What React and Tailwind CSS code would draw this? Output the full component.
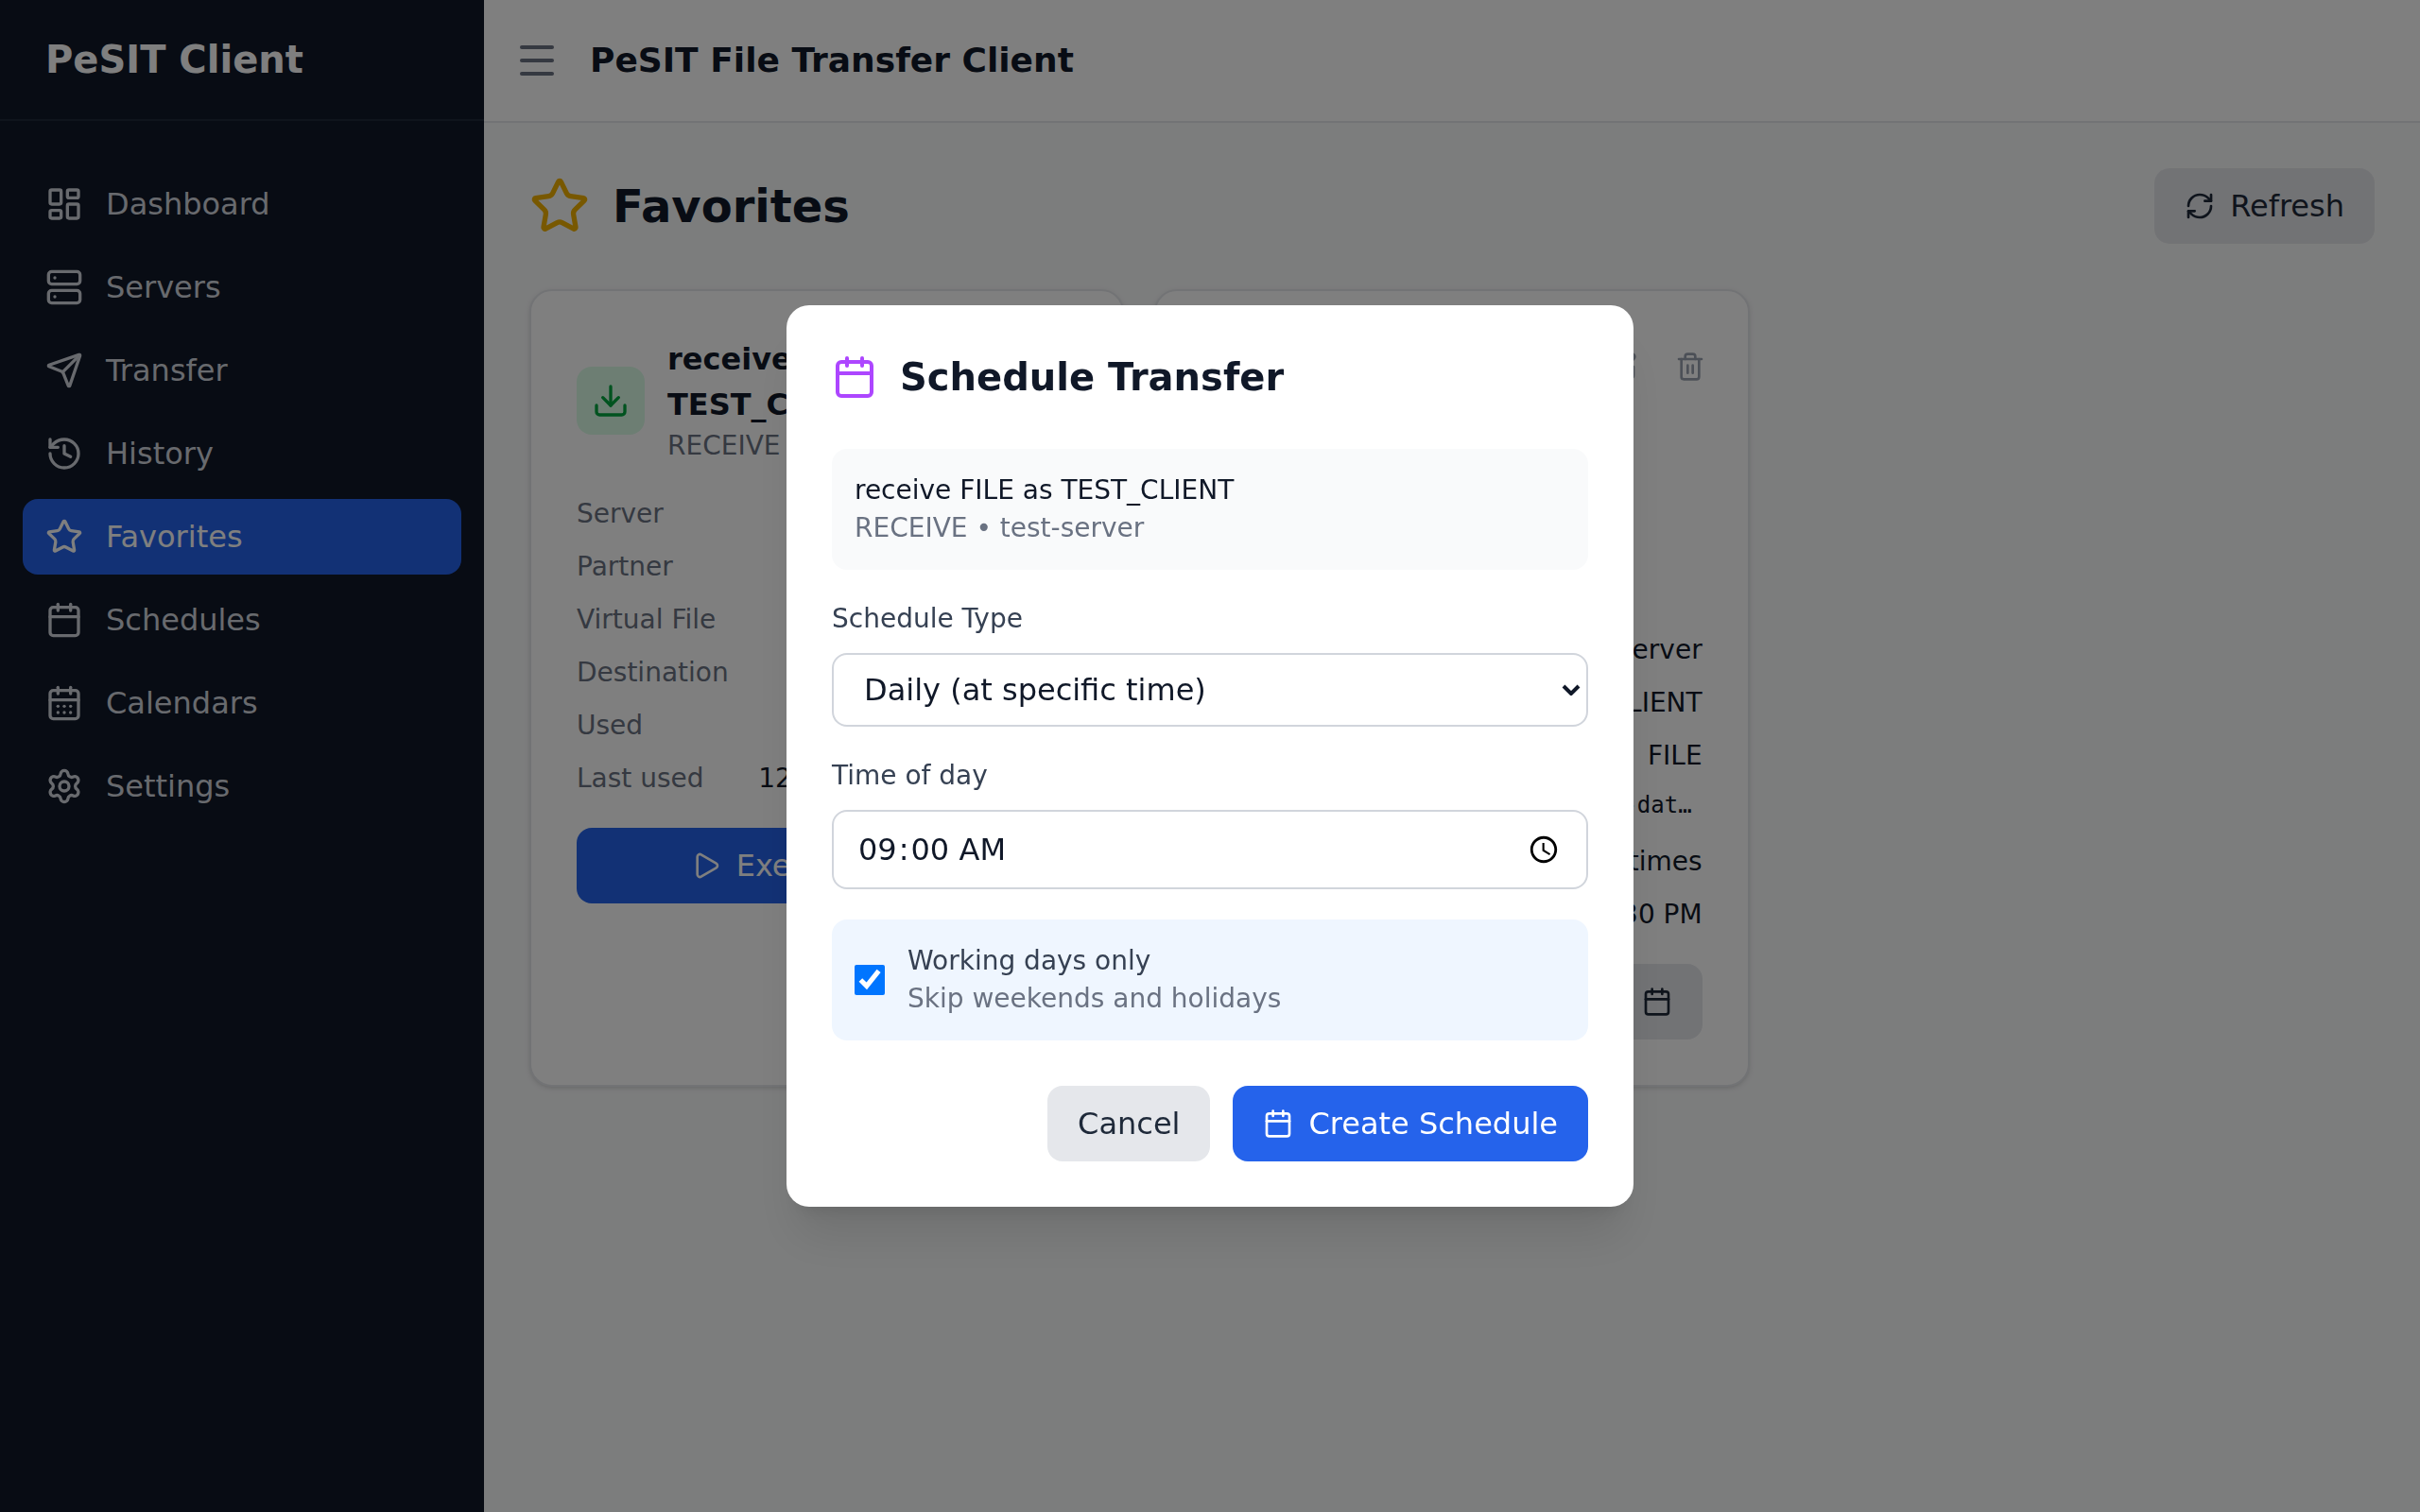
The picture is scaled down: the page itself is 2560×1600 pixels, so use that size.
import React, { useState } from 'react'
import {
  Calendar,
  CalendarDays,
  Download,
  History,
  LayoutDashboard,
  Menu,
  Play,
  RefreshCw,
  Send,
  Server,
  Settings,
  SquarePen,
  Star,
  Trash2,
} from 'lucide-react'
import clsx from 'clsx'

const navigation = [
  { name: 'Dashboard', href: '#dashboard', icon: LayoutDashboard },
  { name: 'Servers', href: '#servers', icon: Server },
  { name: 'Transfer', href: '#transfer', icon: Send },
  { name: 'History', href: '#history', icon: History },
  { name: 'Favorites', href: '#favorites', icon: Star },
  { name: 'Schedules', href: '#schedules', icon: Calendar },
  { name: 'Calendars', href: '#calendars', icon: CalendarDays },
  { name: 'Settings', href: '#settings', icon: Settings },
]

const favorites = [
  {
    id: 1,
    name: 'receive FILE as TEST_CLIENT',
    direction: 'RECEIVE',
    server: 'test-server',
    partner: 'TEST_CLIENT',
    virtualFile: 'FILE',
    destination: '/data/in/client-data.txt',
    used: '2 times',
    lastUsed: '12/16/2025, 9:44:30 PM',
  },
  {
    id: 2,
    name: 'receive FILE as TEST_CLIENT_CPY from test-server with daily archive',
    direction: 'RECEIVE',
    server: 'test-server',
    partner: 'TEST_CLIENT',
    virtualFile: 'FILE',
    destination: '/data/in/client-data.txt',
    used: '3 times',
    lastUsed: '12/16/2025, 9:40:30 PM',
  },
]

function Button({ variant = 'primary', className, children, ...props }) {
  return (
    <button
      type="button"
      className={clsx(
        'flex items-center justify-center gap-4 rounded-2xl px-8 py-4',
        variant === 'primary' ? 'bg-[#2563eb] text-white' : 'bg-gray-200 text-gray-800',
        className
      )}
      {...props}
    >
      {children}
    </button>
  )
}

function Sidebar({ current }) {
  return (
    <aside className="w-128 shrink-0 bg-gray-900 text-white">
      <div className="flex h-32 items-center border-b-2 border-gray-800 px-12">
        <span className="text-[40px] leading-14 font-bold">PeSIT Client</span>
      </div>
      <nav className="flex flex-col gap-2 px-6 py-12">
        {navigation.map((item) => (
          <a
            key={item.name}
            href={item.href}
            className={clsx(
              'flex items-center gap-6 rounded-2xl px-6 py-4',
              item.name === current ? 'bg-[#2563eb] text-white' : 'text-gray-300'
            )}
          >
            <item.icon className="size-10" />
            {item.name}
          </a>
        ))}
      </nav>
    </aside>
  )
}

function DetailRow({ label, children }) {
  return (
    <div className="flex justify-between">
      <dt className="text-gray-500">{label}</dt>
      {children}
    </div>
  )
}

function FavoriteCard({ favorite }) {
  return (
    <article className="rounded-3xl border-2 border-gray-200 bg-white p-12 shadow-[0_2px_6px_rgba(0,0,0,0.1),0_2px_4px_-2px_rgba(0,0,0,0.1)]">
      <div className="mb-8 flex items-start justify-between">
        <div className="flex items-center gap-6">
          <div className="rounded-2xl bg-green-100 p-4 text-green-600">
            <Download className="size-10" />
          </div>
          <div>
            <h3 className="font-semibold text-gray-900">{favorite.name}</h3>
            <p className="text-[28px] leading-10 text-gray-500">{favorite.direction}</p>
          </div>
        </div>
        <div className="flex gap-2 text-gray-400">
          <button type="button" aria-label="Edit" className="p-4">
            <SquarePen className="size-8" />
          </button>
          <button type="button" aria-label="Delete" className="p-4">
            <Trash2 className="size-8" />
          </button>
        </div>
      </div>

      <dl className="mb-8 flex flex-col gap-4 text-[28px] leading-10 text-gray-900">
        <DetailRow label="Server">
          <dd>{favorite.server}</dd>
        </DetailRow>
        <DetailRow label="Partner">
          <dd>{favorite.partner}</dd>
        </DetailRow>
        <DetailRow label="Virtual File">
          <dd>{favorite.virtualFile}</dd>
        </DetailRow>
        <DetailRow label="Destination">
          <dd className="max-w-[300px] truncate font-['DejaVu_Sans_Mono',monospace] text-2xl">
            {favorite.destination}
          </dd>
        </DetailRow>
        <DetailRow label="Used">
          <dd>{favorite.used}</dd>
        </DetailRow>
        <DetailRow label="Last used">
          <dd>{favorite.lastUsed}</dd>
        </DetailRow>
      </dl>

      <div className="flex gap-4">
        <Button className="flex-1">
          <Play className="size-8" />
          Execute
        </Button>
        <Button variant="secondary" aria-label="Schedule">
          <Calendar className="size-8" />
        </Button>
      </div>
    </article>
  )
}

function ScheduleModal({ favorite }) {
  const [type, setType] = useState('daily')
  const [time, setTime] = useState('09:00')
  const [workingDays, setWorkingDays] = useState(true)

  return (
    <div className="fixed inset-0 flex items-center justify-center bg-black/50">
      <div
        role="dialog"
        aria-labelledby="schedule-title"
        className="w-full max-w-4xl rounded-3xl bg-white p-12 shadow-[0_40px_50px_-10px_rgba(0,0,0,0.1),0_16px_20px_-12px_rgba(0,0,0,0.1)]"
      >
        <h2
          id="schedule-title"
          className="mb-12 flex items-center gap-6 text-[40px] leading-14 font-bold text-gray-900"
        >
          <Calendar className="size-12 text-purple-500" />
          Schedule Transfer
        </h2>

        <div className="flex flex-col gap-8">
          <div className="rounded-2xl bg-gray-50 p-6 text-[28px] leading-10">
            <p className="text-gray-900">{favorite.name}</p>
            <p className="text-gray-500">
              {favorite.direction} • {favorite.server}
            </p>
          </div>

          <div>
            <label htmlFor="schedule-type" className="mb-4 block text-[28px] leading-10 text-gray-700">
              Schedule Type
            </label>
            <div className="relative">
              <select
                id="schedule-type"
                value={type}
                onChange={(e) => setType(e.target.value)}
                className="block h-[78px] w-full appearance-none rounded-2xl border-2 border-gray-300 bg-white px-8 text-gray-900"
              >
                <option value="once">One time</option>
                <option value="hourly">Hourly</option>
                <option value="daily">Daily (at specific time)</option>
                <option value="weekly">Weekly</option>
              </select>
              <svg
                className="pointer-events-none absolute inset-y-0 right-2 my-auto h-3 w-5 text-gray-900"
                viewBox="0 0 20 12"
                fill="none"
                stroke="currentColor"
                strokeWidth="4"
              >
                <path d="M2 2l8 8 8-8" />
              </svg>
            </div>
          </div>

          <div>
            <label htmlFor="schedule-time" className="mb-4 block text-[28px] leading-10 text-gray-700">
              Time of day
            </label>
            <input
              id="schedule-time"
              type="time"
              value={time}
              onChange={(e) => setTime(e.target.value)}
              className="block w-full rounded-2xl border-2 border-gray-300 bg-white px-6 py-4 text-gray-900 [&::-webkit-calendar-picker-indicator]:p-1 [&::-webkit-datetime-edit-ampm-field]:px-0.5 [&::-webkit-datetime-edit-hour-field]:px-0.5 [&::-webkit-datetime-edit-minute-field]:px-0.5"
            />
          </div>

          <div className="flex items-center gap-6 rounded-2xl bg-blue-50 p-6">
            <input
              id="working-days"
              type="checkbox"
              checked={workingDays}
              onChange={(e) => setWorkingDays(e.target.checked)}
              className="size-8"
            />
            <label htmlFor="working-days" className="text-[28px] leading-10 text-gray-700">
              Working days only
              <span className="block text-gray-500">Skip weekends and holidays</span>
            </label>
          </div>
        </div>

        <div className="mt-12 flex justify-end gap-6">
          <Button variant="secondary">Cancel</Button>
          <Button>
            <Calendar className="size-8" />
            Create Schedule
          </Button>
        </div>
      </div>
    </div>
  )
}

function App() {
  return (
    <div className="flex min-h-screen bg-gray-50 font-['DejaVu_Sans',sans-serif] text-[32px] leading-12">
      <Sidebar current="Favorites" />

      <div className="min-w-0 flex-1">
        <header className="flex items-center gap-8 border-b-2 border-gray-200 bg-white p-8">
          <button type="button" aria-label="Toggle sidebar" className="py-2 text-gray-500">
            <Menu className="size-12" />
          </button>
          <h1 className="text-4xl leading-14 font-semibold text-gray-900">PeSIT File Transfer Client</h1>
        </header>

        <main className="p-12">
          <div className="mb-12 flex items-center justify-between">
            <div className="flex items-center gap-6">
              <Star className="size-16 text-yellow-500" />
              <h2 className="text-5xl leading-16 font-bold text-gray-900">Favorites</h2>
            </div>
            <Button variant="secondary">
              <RefreshCw className="size-8" />
              Refresh
            </Button>
          </div>

          <div className="grid grid-cols-3 items-stretch gap-8">
            {favorites.map((favorite) => (
              <FavoriteCard key={favorite.id} favorite={favorite} />
            ))}
          </div>
        </main>
      </div>

      <ScheduleModal favorite={favorites[0]} />
    </div>
  )
}

export default App
